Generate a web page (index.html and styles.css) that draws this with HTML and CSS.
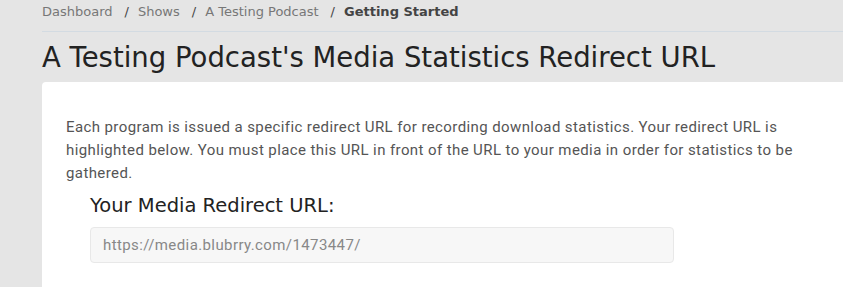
FILE: index.html
```html
<!DOCTYPE html>
<html lang="en">
<head>
    <meta charset="UTF-8">
    <meta name="viewport" content="width=device-width, initial-scale=1.0">
    <title>Media Statistics Redirect URL</title>
    <link rel="stylesheet" href="styles.css">
</head>
<body>
    <div class="page">
        <nav class="breadcrumb">
            <a href="#">Dashboard</a>
            <span class="sep">/</span>
            <a href="#">Shows</a>
            <span class="sep">/</span>
            <a href="#">A Testing Podcast</a>
            <span class="sep">/</span>
            <span class="current">Getting Started</span>
        </nav>

        <h1 class="page-title">A Testing Podcast's Media Statistics Redirect URL</h1>

        <div class="card">
            <p class="intro">Each program is issued a specific redirect URL for recording download statistics. Your redirect URL is highlighted below. You must place this URL in front of the URL to your media in order for statistics to be gathered.</p>

            <div class="redirect">
                <h3>Your Media Redirect URL:</h3>
                <input type="text" class="redirect-input" value="https://media.blubrry.com/1473447/" readonly>
            </div>
        </div>
    </div>
</body>
</html>
```

FILE: styles.css
```css
body {
    margin: 0;
    background-color: #e5e5e5;
    font-family: "DejaVu Sans", sans-serif;
    color: #222;
    overflow: hidden;
}

.page {
    padding-left: 42px;
}

.breadcrumb {
    display: flex;
    align-items: flex-start;
    height: 22px;
    padding-top: 1px;
    padding-bottom: 8px;
    border-bottom: 1px solid #d3dbe2;
    font-size: 13px;
    line-height: 22px;
    color: #777;
}

.breadcrumb a {
    color: #777;
    text-decoration: none;
}

.breadcrumb .sep {
    margin: 0 9px 0 12px;
    color: #444;
}

.breadcrumb .current {
    font-weight: 700;
    color: #444;
}

.page-title {
    margin: 0;
    padding-top: 8px;
    height: 42px;
    font-size: 27.5px;
    line-height: 34px;
    font-weight: 400;
    color: #222;
}

.card {
    background-color: #fff;
    border-radius: 4px 0 0 0;
    padding: 34px 24px 24px;
}

.intro {
    margin: 0;
    font-family: Roboto, sans-serif;
    font-size: 15px;
    letter-spacing: 0.4px;
    line-height: 23px;
    color: #555;
}

.redirect {
    padding: 9px 0 0 24px;
}

.redirect h3 {
    margin: 0 0 9px;
    font-size: 19.5px;
    line-height: 24px;
    font-weight: 400;
    color: #222;
}

.redirect-input {
    box-sizing: border-box;
    display: block;
    width: 584px;
    height: 36px;
    padding: 0 12px;
    border: 1px solid #e8e8e8;
    border-radius: 4px;
    background-color: #f7f7f7;
    font-family: Roboto, sans-serif;
    font-size: 15px;
    letter-spacing: 0.4px;
    color: #888;
}
```
